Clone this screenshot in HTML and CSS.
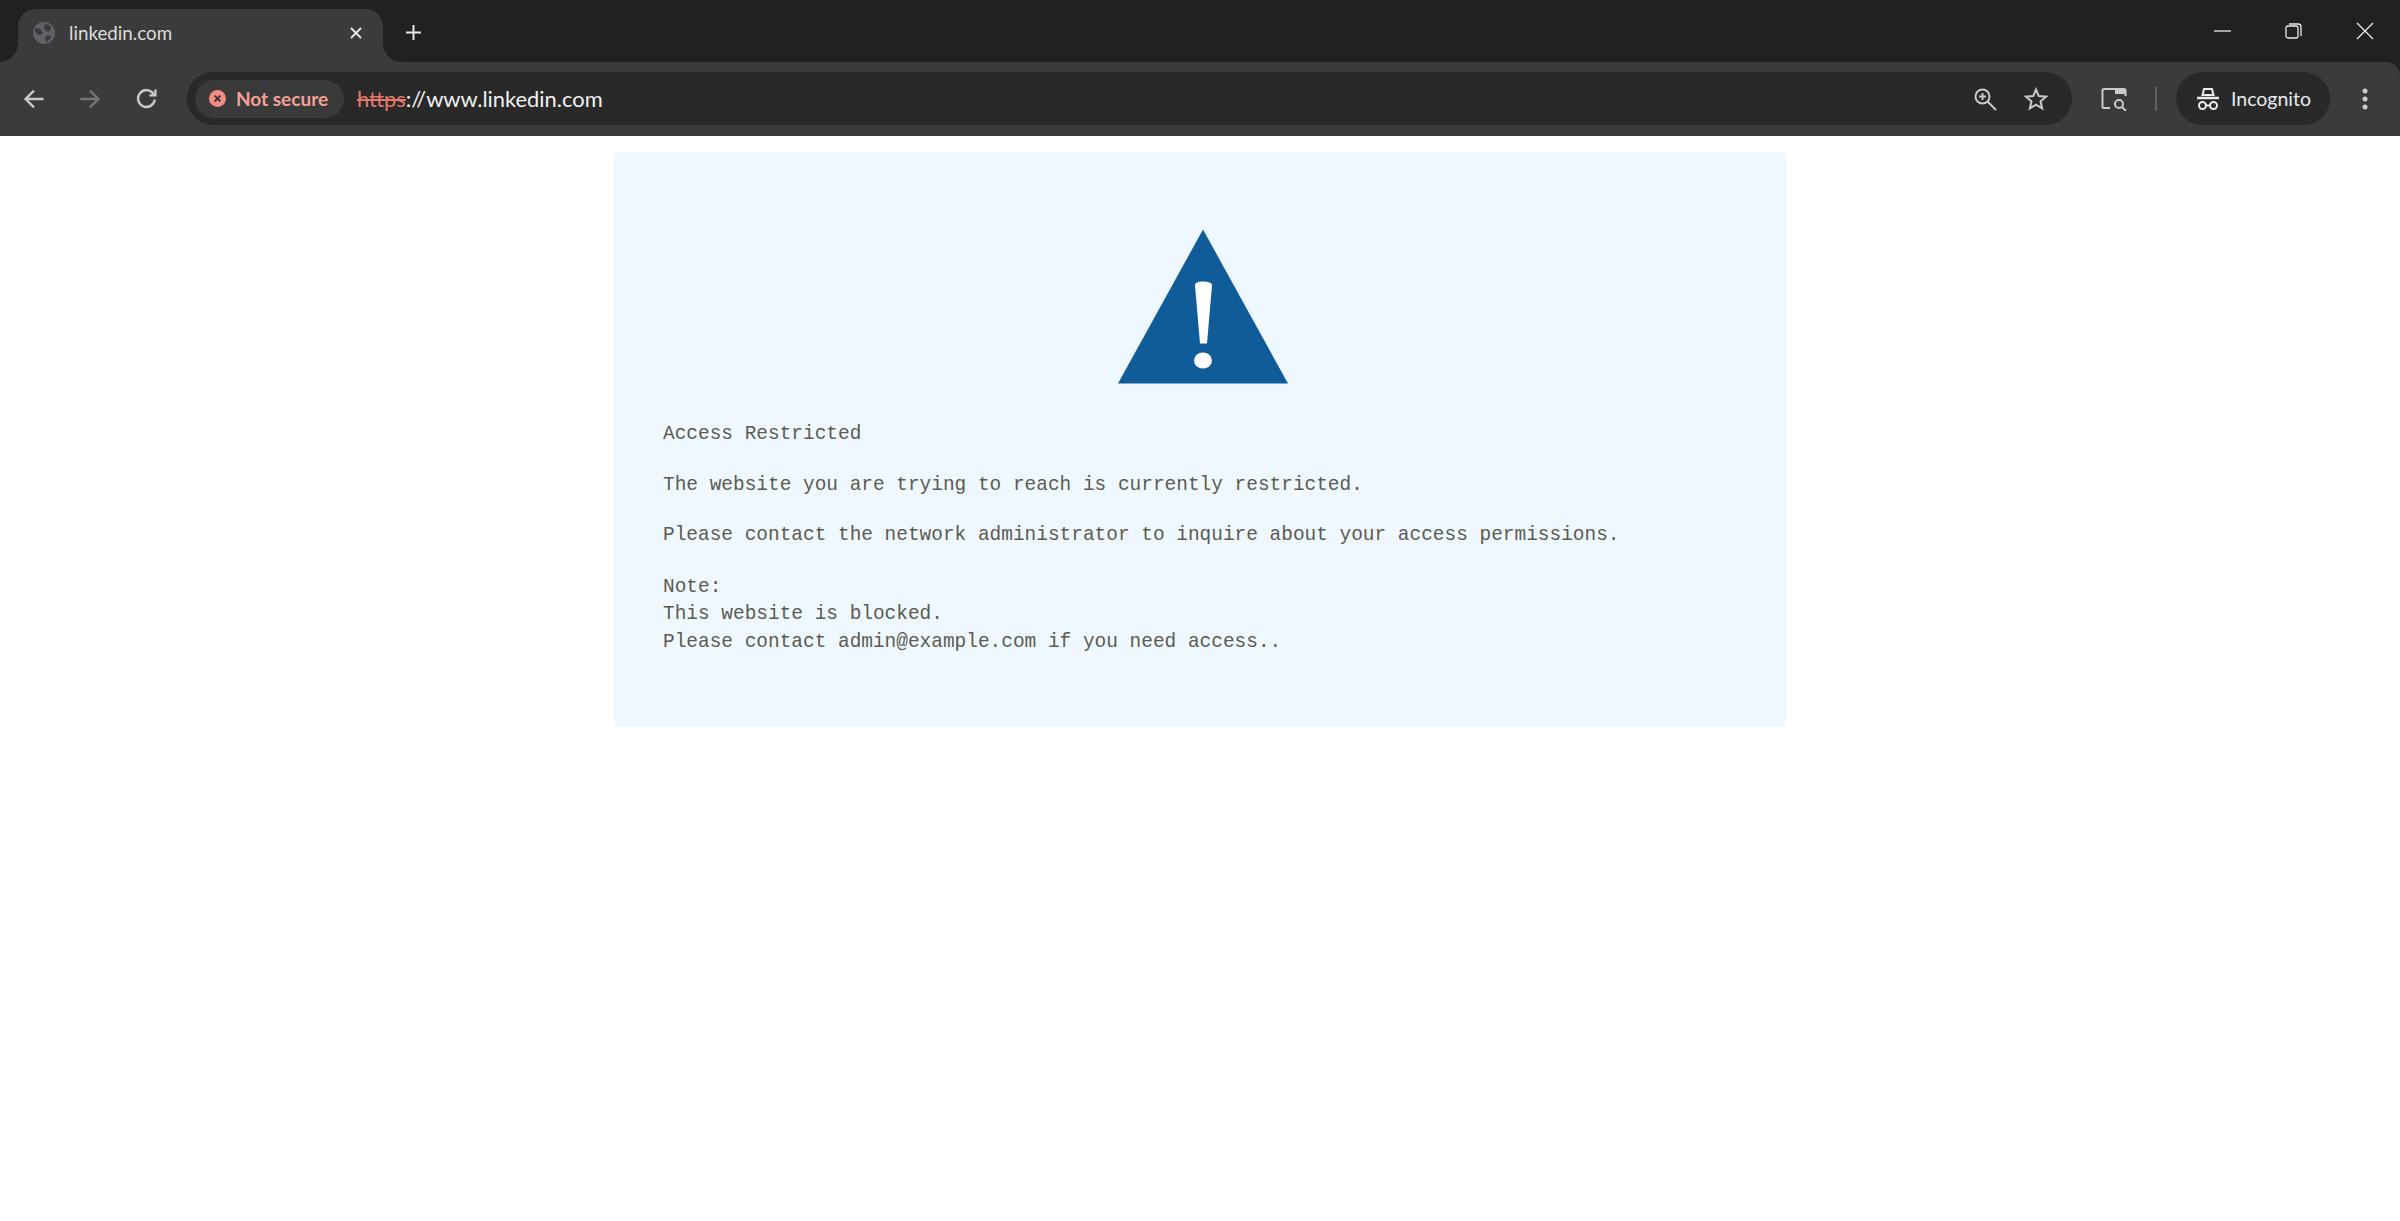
FILE: index.html
```html
<!DOCTYPE html>
<html lang="en">
<head>
<meta charset="utf-8">
<title>linkedin.com</title>
<link rel="stylesheet" href="styles.css">
</head>
<body>
<header class="chrome">
  <div class="tabstrip">
    <div class="tab">
      <svg class="favicon" viewBox="0 0 20 20"><circle cx="10" cy="10" r="10" fill="#5f6368"/><path d="M2 5.500l4 .5 3 3-1.500 2.500H5L1.500 8.500zM11 1.500l5 2 .5 3-3 2.500-2.500-1.500-1-3zM11.500 12.500h4.500l.5 1.500-4.500 4.500-1-3.500z" fill="#3b3b3b"/></svg>
      <span class="tab-title">linkedin.com</span>
      <svg class="tab-close" viewBox="0 0 14 14"><path d="M2 2l10 10M12 2L2 12" stroke="#e8eaed" stroke-width="1.8"/></svg>
    </div>
    <svg class="new-tab" viewBox="0 0 14 14"><path d="M7 0v14M0 7h14" stroke="#e8eaed" stroke-width="1.8"/></svg>
    <div class="window-controls">
      <svg class="win-icon" viewBox="0 0 18 18"><path d="M0 9h17" stroke="#e8eaed" stroke-width="1.3"/></svg>
      <svg class="win-icon" viewBox="0 0 18 18"><rect x="1" y="4" width="12" height="12" rx="2" fill="none" stroke="#e8eaed" stroke-width="1.3"/><path d="M4 2h9a3 3 0 0 1 3 3v9" fill="none" stroke="#e8eaed" stroke-width="1.3"/></svg>
      <svg class="win-icon" viewBox="0 0 18 18"><path d="M1 1l16 16M17 1L1 17" stroke="#e8eaed" stroke-width="1.3"/></svg>
    </div>
  </div>
  <div class="toolbar">
    <svg class="nav-icon" viewBox="0 0 20 20"><path d="M18 10H3M10 3l-7 7 7 7" fill="none" stroke="#c8c9cb" stroke-width="2"/></svg>
    <svg class="nav-icon nav-dim" viewBox="0 0 20 20"><path d="M2 10h15M10 3l7 7-7 7" fill="none" stroke="#747577" stroke-width="2"/></svg>
    <svg class="nav-icon" viewBox="0 0 20 20"><path d="M16.500 10.500A7 7 0 1 1 14 4.200L17 7M17 2v5h-5" fill="none" stroke="#c8c9cb" stroke-width="2"/></svg>
    <div class="omnibox">
      <div class="security-chip">
        <svg class="chip-icon" viewBox="0 0 16 16"><circle cx="8" cy="8" r="8" fill="#f28b82"/><path d="M5.300 5.300l5.400 5.400M10.700 5.300l-5.400 5.400" stroke="#3a2b2b" stroke-width="1.700"/></svg>
        <span class="chip-label">Not secure</span>
      </div>
      <div class="url"><span class="scheme">https</span>://www.linkedin.com</div>
      <svg class="omni-icon" viewBox="0 0 24 24"><circle cx="9.500" cy="9.500" r="7" fill="none" stroke="#c8c9cb" stroke-width="2"/><path d="M14.500 14.500L23 23M9.500 6v7M6 9.500h7" stroke="#c8c9cb" stroke-width="2"/></svg>
      <svg class="omni-icon" viewBox="0 0 24 24"><path d="M12 2.500l2.800 6.600 7.200.6-5.500 4.700 1.700 7-6.200-3.700-6.200 3.700 1.700-7L2 9.700l7.200-.6z" fill="none" stroke="#c8c9cb" stroke-width="2"/></svg>
    </div>
    <svg class="side-icon" viewBox="0 0 28 24"><path d="M9 21H3a1.500 1.500 0 0 1-1.500-1.500v-16A1.500 1.500 0 0 1 3 2h20a1.500 1.500 0 0 1 1.500 1.500V9" fill="none" stroke="#c9cacc" stroke-width="2"/><path d="M14 2h10v5H14z" fill="#c9cacc"/><circle cx="18" cy="17" r="4" fill="none" stroke="#c9cacc" stroke-width="2"/><path d="M21 20l4 4" stroke="#c9cacc" stroke-width="2"/></svg>
    <div class="divider"></div>
    <div class="profile">
      <svg class="incognito-icon" viewBox="0 0 24 24"><path d="M6.500 8l1.500-6h8l1.500 6z" fill="none" stroke="#e8eaed" stroke-width="2"/><path d="M1 11h22" stroke="#e8eaed" stroke-width="2.500"/><circle cx="6.500" cy="18.500" r="3.500" fill="none" stroke="#e8eaed" stroke-width="2"/><circle cx="17.500" cy="18.500" r="3.500" fill="none" stroke="#e8eaed" stroke-width="2"/><path d="M10 18.500h4" stroke="#e8eaed" stroke-width="2"/></svg>
      <span class="profile-label">Incognito</span>
    </div>
    <svg class="menu-icon" viewBox="0 0 6 24"><circle cx="3" cy="4" r="2.500" fill="#c8c9cb"/><circle cx="3" cy="12" r="2.500" fill="#c8c9cb"/><circle cx="3" cy="20" r="2.500" fill="#c8c9cb"/></svg>
  </div>
</header>
<main class="page">
  <section class="notice">
    <svg class="warning" viewBox="0 0 170 155"><path d="M85 0L170 154H0z" fill="#0f5c99"/><path d="M77 56c0-3 3-4 8-4s9 1 9 4l-5 58h-7z" fill="#fff"/><ellipse cx="85" cy="131" rx="9" ry="8" fill="#fff"/></svg>
    <p class="line">Access Restricted</p>
    <p class="line">The website you are trying to reach is currently restricted.</p>
    <p class="line spaced">Please contact the network administrator to inquire about your access permissions.</p>
    <p class="line note">Note:<br>This website is blocked.<br>Please contact admin@example.com if you need access..</p>
  </section>
</main>
</body>
</html>
```
FILE: styles.css
```css
* { box-sizing: border-box; }
html, body { margin: 0; height: 100%; background: #fff; overflow: hidden; }
body { font-family: "Lato", "Liberation Sans", sans-serif; }

.chrome { height: 136px; display: flex; flex-direction: column; background: #202221; }
.tabstrip { height: 62px; display: flex; align-items: flex-start; padding: 9px 0 0 18px; }
.tab { position: relative; width: 365px; height: 53px; background: #3b3b3b; border-radius: 18px 18px 0 0; display: flex; align-items: center; padding: 0 20px 6px 15px; }
.tab::before, .tab::after { content: ""; position: absolute; bottom: 0; width: 18px; height: 18px; }
.tab::before { left: -18px; background: radial-gradient(circle at 0 0, #202221 17.500px, #3b3b3b 18px); }
.tab::after { right: -18px; background: radial-gradient(circle at 100% 0, #202221 17.500px, #3b3b3b 18px); }
.favicon { width: 22px; height: 22px; flex: none; }
.tab-title { margin-left: 14px; font-size: 18.800px; color: #dcdcdc; flex: 1; }
.tab-close { width: 14px; height: 14px; flex: none; }
.new-tab { width: 15px; height: 15px; margin: 16px 0 0 23px; flex: none; }
.window-controls { margin-left: auto; display: flex; align-items: center; gap: 53px; padding: 13px 26px 0 0; }
.win-icon { width: 18px; height: 18px; display: block; }

.toolbar { height: 74px; background: #3b3b3b; border-radius: 0 14px 0 0; display: flex; align-items: center; padding: 0 0 1px 0; }
.nav-icon { width: 24px; height: 24px; margin-left: 22px; flex: none; }
.nav-icon + .nav-icon { margin-left: 32px; }
.nav-icon + .nav-icon + .nav-icon { margin-left: 33px; }
.omnibox { width: 1885px; height: 53px; margin-left: 28px; background: #292929; border-radius: 27px; display: flex; align-items: center; padding: 0 24px 0 8px; flex: none; }
.security-chip { height: 38px; width: 149px; background: #3a3a3a; border-radius: 19px; display: flex; align-items: center; padding-left: 14px; gap: 10px; flex: none; }
.chip-icon { width: 17px; height: 17px; flex: none; }
.chip-label { font-size: 19px; font-weight: 700; color: #f5a097; white-space: nowrap; }
.url { margin-left: 13px; font-size: 21.900px; color: #f1f1f1; flex: 1; }
.scheme { color: #e4786c; text-decoration: line-through; }
.omni-icon { width: 24px; height: 24px; margin-left: 27px; flex: none; }
.side-icon { width: 28px; height: 24px; margin-left: 29px; flex: none; }
.divider { width: 2px; height: 24px; background: #5f6062; margin-left: 26px; flex: none; }
.profile { width: 154px; height: 53px; margin-left: 19px; background: #292929; border-radius: 27px; display: flex; align-items: center; padding-left: 20px; gap: 11px; flex: none; }
.incognito-icon { width: 24px; height: 24px; flex: none; }
.profile-label { font-size: 19.500px; color: #e8eaed; }
.menu-icon { width: 6px; height: 24px; margin-left: 32px; flex: none; }

.page { display: flex; padding: 16px 0 0 614px; }
.notice { width: 1172px; height: 575px; background: #f0f8ff; padding: 77px 32px 0 49px; font-family: "Liberation Mono", monospace; font-size: 19.450px; line-height: 27.500px; color: #5b5b52; }
.warning { display: block; width: 170px; height: 156px; margin: 0 auto 36px 454.500px; }
.line { margin: 0 0 23px; white-space: nowrap; }
.spaced { margin-bottom: 24px; }
.note { margin: 0; }
```
